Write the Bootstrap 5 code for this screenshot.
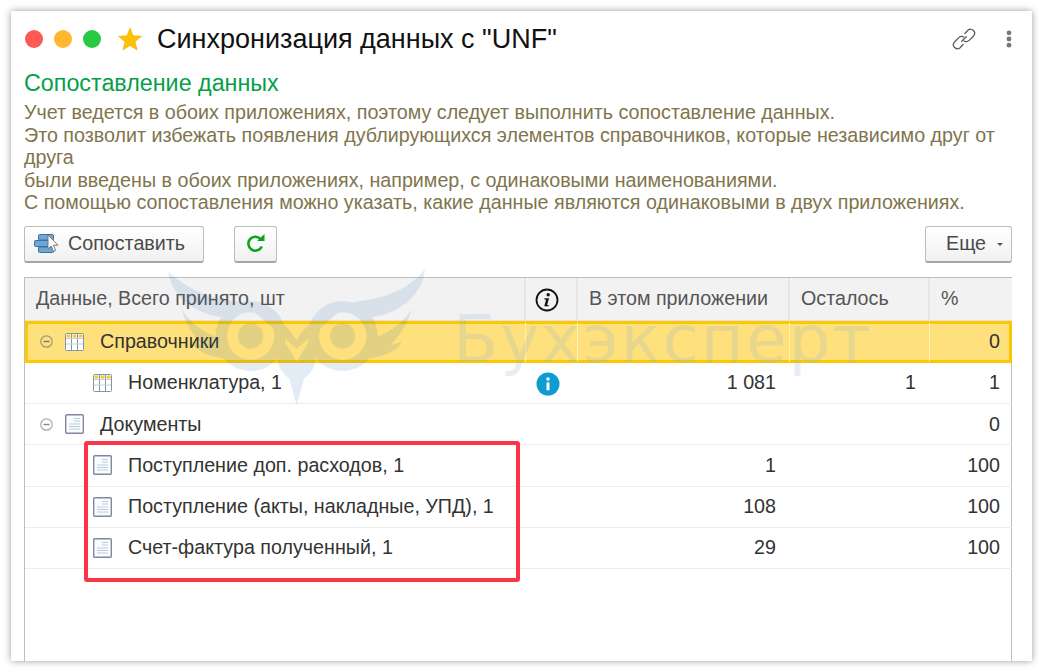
<!DOCTYPE html>
<html lang="ru">

<head>
  <meta charset="UTF-8" />
  <meta name="viewport" content="width=device-width, initial-scale=1.0" />
  <title>Синхронизация данных с "UNF"</title>
  <link href="https://cdn.jsdelivr.net/npm/bootstrap@5.3.0/dist/css/bootstrap.min.css" rel="stylesheet" />
  <style>
    html, body { height: 672px; overflow: hidden; background: #fff; }
    body { font-family: "Liberation Sans", Arial, sans-serif; padding: 11px 11px 11px 11px; }

    .sync-window { position: relative; height: 650px; background: #fff; box-shadow: 0 0 7px rgba(0, 0, 0, .4); overflow: hidden; padding: 0 20px 0 13px; }

    /* title bar */
    .title-bar { height: 56px; }
    .win-dot { width: 18px; height: 18px; border-radius: 50%; margin-right: 11px; flex: none; }
    .dot-red { background: #fe5a55; margin-left: 1px; }
    .dot-yellow { background: #feb72e; }
    .dot-green { background: #28c940; }
    .title-star { margin: 0 14px 0 5px; flex: none; }
    .title-text { font-size: 27px; line-height: 30px; color: #111; }
    .link-ico { margin-right: 30px; }

    .form-caption { font-size: 23.3px; line-height: 24px; color: #05a04a; margin-top: 4px; }
    .form-note { font-size: 19.7px; line-height: 22.5px; color: #80754d; margin-top: 6px; margin-bottom: 0; }

    /* command bar */
    .cmd-bar { margin-top: 12.5px; height: 37px; margin-bottom: 14px; }
    .cmd-btn { height: 37px; font-size: 19.7px; color: #4a4a4a; border: 1px solid #bdbdbd; border-bottom: 2px solid #a6a6a6; border-radius: 3px; background: linear-gradient(#fff, #f1f1f1); padding: 0; }
    .btn-match { width: 180px; padding-left: 9px; }
    .match-ico { margin-right: 9px; }
    .btn-refresh { width: 43px; margin-left: 30px; }
    .btn-more { width: 87px; padding-left: 20px; }
    .more-caret { width: 0; height: 0; border-left: 3.5px solid transparent; border-right: 3.5px solid transparent; border-top: 3.5px solid #555; margin-left: 11px; }

    /* data table */
    .table-box { border: 1px solid #bdbdbd; border-bottom: 0; height: 384px; }
    .data-table { table-layout: fixed; width: 987px; margin: 0; border-collapse: separate; border-spacing: 0; font-size: 19.7px; color: #333; }
    .data-table th, .data-table td { padding: 0 11px; vertical-align: middle; white-space: nowrap; background: transparent; box-shadow: none; color: #333; font-weight: 400; }
    .data-table th { height: 43px; background: #f2f2f2; color: #555; border-bottom: 1px solid #e3e3e3; border-right: 2px solid #e6e6e6; }
    .data-table th:last-child { border-right: 0; }
    .data-table td { height: 41.2px; border-bottom: 1px solid #ebebeb; }
    .data-table td.text-end { padding-right: 14px; }
    .data-table td.text-end:last-child { padding-right: 12px; }
    .data-table tr.row-active td { height: 42px; background: #fee17c; border-top: 3px solid #fdc800; border-bottom: 3px solid #fdc800; border-right: 1px solid #fff0b4; }
    .data-table tr.row-active td:first-child { border-left: 3px solid #fdc800; padding-left: 8px; }
    .data-table tr.row-active td:last-child { border-right: 3px solid #fdc800; padding-right: 9px; }
    .tree-minus { flex: none; width: 13px; height: 13px; margin: 0 12px 0 4px; }
    .tree-icon { flex: none; margin-right: 16px; }
    .data-table td.row-leaf { padding-left: 68px; }
    .data-table th.cell-icon, .data-table td.cell-icon { padding: 0 8px 0 0; text-align: center; }

    /* things lying over the table */
    .red-frame { position: absolute; left: 73px; top: 430px; width: 436px; height: 141px; border: 4px solid #fb3446; border-radius: 3px; pointer-events: none; }
    .mark-owl { position: absolute; left: 149px; top: 251px; opacity: .13; pointer-events: none; }
    .mark-name { position: absolute; left: 442px; top: 294px; font-family: "DejaVu Sans", sans-serif; font-size: 66px; line-height: 70px; letter-spacing: 2px; color: #8fb0d6; opacity: .2; pointer-events: none; white-space: nowrap; }
  </style>
</head>

<body>
  <div class="sync-window">
    <!-- Title bar -->
    <div class="title-bar d-flex align-items-center">
      <span class="win-dot dot-red"></span>
      <span class="win-dot dot-yellow"></span>
      <span class="win-dot dot-green"></span>
      <svg class="title-star" width="26" height="24" viewBox="0 0 26 25">
        <path d="M13 1l3.200 8.200 8.800.5-6.800 5.600 2.300 8.700L13 19.200l-7.500 4.800 2.300-8.700L1 9.700l8.800-.5z" fill="#fdc107" stroke="#f0ab00" stroke-width=".6" />
      </svg>
      <span class="title-text">Синхронизация данных с "UNF"</span>
      <div class="ms-auto d-flex align-items-center">
        <svg class="link-ico" width="24" height="24" viewBox="0 0 26 26" fill="none" stroke="#5c5c5c" stroke-width="1.400" stroke-linecap="round">
          <path d="M14 7l3.200-3.500a4.400 4.400 0 0 1 6.200 6.200l-4.800 4.800a4.400 4.400 0 0 1-5.400.6" />
          <path d="M12 19l-3.200 3.500a4.400 4.400 0 0 1-6.200-6.200l4.800-4.800a4.400 4.400 0 0 1 5.400-.6" />
          <path d="M10.500 15.500l5-5" />
        </svg>
        <svg width="6" height="18" viewBox="0 0 6 18" fill="#777">
          <circle cx="3" cy="2.800" r="2.400" /><circle cx="3" cy="9" r="2.400" /><circle cx="3" cy="15.200" r="2.400" />
        </svg>
      </div>
    </div>

    <div class="form-caption">Сопоставление данных</div>
    <p class="form-note">Учет ведется в обоих приложениях, поэтому следует выполнить сопоставление данных.<br />
      Это позволит избежать появления дублирующихся элементов справочников, которые независимо друг от<br />
      друга<br />
      были введены в обоих приложениях, например, с одинаковыми наименованиями.<br />
      С помощью сопоставления можно указать, какие данные являются одинаковыми в двух приложениях.</p>

    <!-- Commands -->
    <div class="cmd-bar d-flex align-items-center">
      <button type="button" class="btn cmd-btn btn-match d-flex align-items-center">
        <svg class="match-ico" width="25" height="20" viewBox="0 0 25 20">
          <g fill="#6fa6d6" stroke="#39719f" stroke-width="1">
            <rect x="4.500" y=".5" width="15" height="5.500" rx="1" />
            <rect x=".5" y="6.500" width="17" height="6" rx="1" />
            <rect x="4.500" y="13" width="15" height="5.500" rx="1" />
          </g>
          <path d="M14 1v14l3.200-3 2.300 5.500 2.200-1-2.300-5.300H24z" fill="#fff" stroke="#777" stroke-width="1" />
        </svg>
        Сопоставить
      </button>
      <button type="button" class="btn cmd-btn btn-refresh d-flex align-items-center justify-content-center">
        <svg width="20" height="20" viewBox="0 0 20 20" fill="none">
          <path d="M15.800 12.500A7 7 0 1 1 14.600 5" stroke="#0ba41b" stroke-width="2.600" />
          <path d="M11 7h7.500V0z" fill="#0ba41b" />
        </svg>
      </button>
      <button type="button" class="btn cmd-btn btn-more ms-auto d-flex align-items-center">
        Еще <span class="more-caret"></span>
      </button>
    </div>

    <!-- Table -->
    <div class="table-box">
      <table class="table data-table">
        <colgroup>
          <col style="width:501px" /><col style="width:52px" /><col style="width:212px" /><col style="width:140px" /><col style="width:82px" />
        </colgroup>
        <thead>
          <tr>
            <th>Данные, Всего принято, шт</th>
            <th class="cell-icon">
              <svg width="24" height="24" viewBox="0 0 24 24">
                <circle cx="12" cy="12" r="10.500" fill="none" stroke="#111" stroke-width="1.800" />
                <circle cx="13.200" cy="6.800" r="1.700" fill="#111" />
                <path d="M9.500 10.300h4.500l-1.900 6.600h1.700l-.4 1.300H9.300l1.800-6.600H9.200z" fill="#111" />
              </svg>
            </th>
            <th>В этом приложении</th>
            <th>Осталось</th>
            <th>%</th>
          </tr>
        </thead>
        <tbody>
          <tr class="row-active">
            <td>
              <div class="d-flex align-items-center">
                <svg class="tree-minus" viewBox="0 0 13 13"><circle cx="6.500" cy="6.500" r="5.700" fill="none" stroke="#9a9a7c" stroke-width="1.200" /><path d="M3.500 6.500h6" stroke="#777" stroke-width="1.400" /></svg>
                <svg class="tree-icon" width="19" height="18" viewBox="0 0 19 18"><use href="#ref-ico" /></svg>
                Справочники
              </div>
            </td>
            <td></td><td></td><td></td>
            <td class="text-end">0</td>
          </tr>
          <tr>
            <td class="row-leaf">
              <div class="d-flex align-items-center">
                <svg class="tree-icon" width="19" height="18" viewBox="0 0 19 18"><use href="#ref-ico" /></svg>
                Номенклатура, 1
              </div>
            </td>
            <td class="cell-icon">
              <svg width="24" height="24" viewBox="0 0 24 24">
                <circle cx="12" cy="12" r="11.500" fill="#0d9bd2" />
                <circle cx="12" cy="7" r="1.800" fill="#fff" />
                <rect x="10.500" y="10.300" width="3" height="8" rx=".6" fill="#fff" />
              </svg>
            </td>
            <td class="text-end">1 081</td>
            <td class="text-end">1</td>
            <td class="text-end">1</td>
          </tr>
          <tr>
            <td>
              <div class="d-flex align-items-center">
                <svg class="tree-minus" viewBox="0 0 13 13"><circle cx="6.500" cy="6.500" r="5.700" fill="none" stroke="#aaa" stroke-width="1.200" /><path d="M3.500 6.500h6" stroke="#888" stroke-width="1.400" /></svg>
                <svg class="tree-icon" width="19" height="20" viewBox="0 0 19 20"><use href="#doc-ico" /></svg>
                Документы
              </div>
            </td>
            <td></td><td></td><td></td>
            <td class="text-end">0</td>
          </tr>
          <tr>
            <td class="row-leaf">
              <div class="d-flex align-items-center"><svg class="tree-icon" width="19" height="20" viewBox="0 0 19 20"><use href="#doc-ico" /></svg>Поступление доп. расходов, 1</div>
            </td>
            <td></td>
            <td class="text-end">1</td>
            <td></td>
            <td class="text-end">100</td>
          </tr>
          <tr>
            <td class="row-leaf">
              <div class="d-flex align-items-center"><svg class="tree-icon" width="19" height="20" viewBox="0 0 19 20"><use href="#doc-ico" /></svg>Поступление (акты, накладные, УПД), 1</div>
            </td>
            <td></td>
            <td class="text-end">108</td>
            <td></td>
            <td class="text-end">100</td>
          </tr>
          <tr>
            <td class="row-leaf">
              <div class="d-flex align-items-center"><svg class="tree-icon" width="19" height="20" viewBox="0 0 19 20"><use href="#doc-ico" /></svg>Счет-фактура полученный, 1</div>
            </td>
            <td></td>
            <td class="text-end">29</td>
            <td></td>
            <td class="text-end">100</td>
          </tr>
        </tbody>
      </table>
    </div>

    <!-- Watermark and red frame lie over the table -->
    <svg class="mark-owl" width="280" height="150" viewBox="0 0 840 450" fill="#2f6fb0">
      <path d="M25 30C70 70 130 105 205 115C290 125 370 165 410 235C450 165 530 125 615 115C690 105 760 70 795 20C790 90 730 150 640 165L560 130L410 260L260 130L180 165C90 150 30 90 25 30z" />
      <circle cx="272" cy="222" r="38" />
      <circle cx="548" cy="222" r="38" />
      <circle cx="272" cy="222" r="88" fill="none" stroke="#2f6fb0" stroke-width="34" />
      <circle cx="548" cy="222" r="88" fill="none" stroke="#2f6fb0" stroke-width="34" />
      <path d="M65 140C85 175 120 205 170 225L205 290C150 285 110 270 95 240L130 250C95 215 75 180 65 140z" />
      <path d="M755 140C735 175 700 205 650 225L615 290C670 285 710 270 725 240L690 250C725 215 745 180 755 140z" />
      <path d="M365 230C390 260 400 285 410 300C420 285 430 260 455 230C475 290 470 320 432 350L410 430L388 350C350 320 345 290 365 230z" />
    </svg>
    <div class="mark-name">Бухэксперт</div>
    <div class="red-frame"></div>
  </div>

  <!-- Shared icons -->
  <svg width="0" height="0" class="d-block">
    <defs>
      <g id="ref-ico">
        <rect x=".5" y=".5" width="18" height="17" rx="1" fill="#fff" stroke="#7d97ab" />
        <path d="M1.500 1.500h3.800v3H1.500zM7.600 1.500h3.800v3H7.600zM13.700 1.500h3.800v3h-3.800z" fill="#f7cb2d" />
        <path d="M6.500 1v16M12.500 1v16" stroke="#7d97ab" fill="none" />
        <path d="M1 5.500h17M1 11h17" stroke="#c3d0da" fill="none" />
      </g>
      <g id="doc-ico">
        <rect x=".7" y=".7" width="17.600" height="18.600" rx="1" fill="#fbfcfe" stroke="#7f889c" stroke-width="1.400" />
        <path d="M9 4.500h6M9 7h6M4 10h11M4 12.500h11M4 15h11" stroke="#b5cbe0" stroke-width="1.200" fill="none" />
      </g>
    </defs>
  </svg>

  <script src="https://cdn.jsdelivr.net/npm/bootstrap@5.3.0/dist/js/bootstrap.bundle.min.js"></script>
</body>

</html>
